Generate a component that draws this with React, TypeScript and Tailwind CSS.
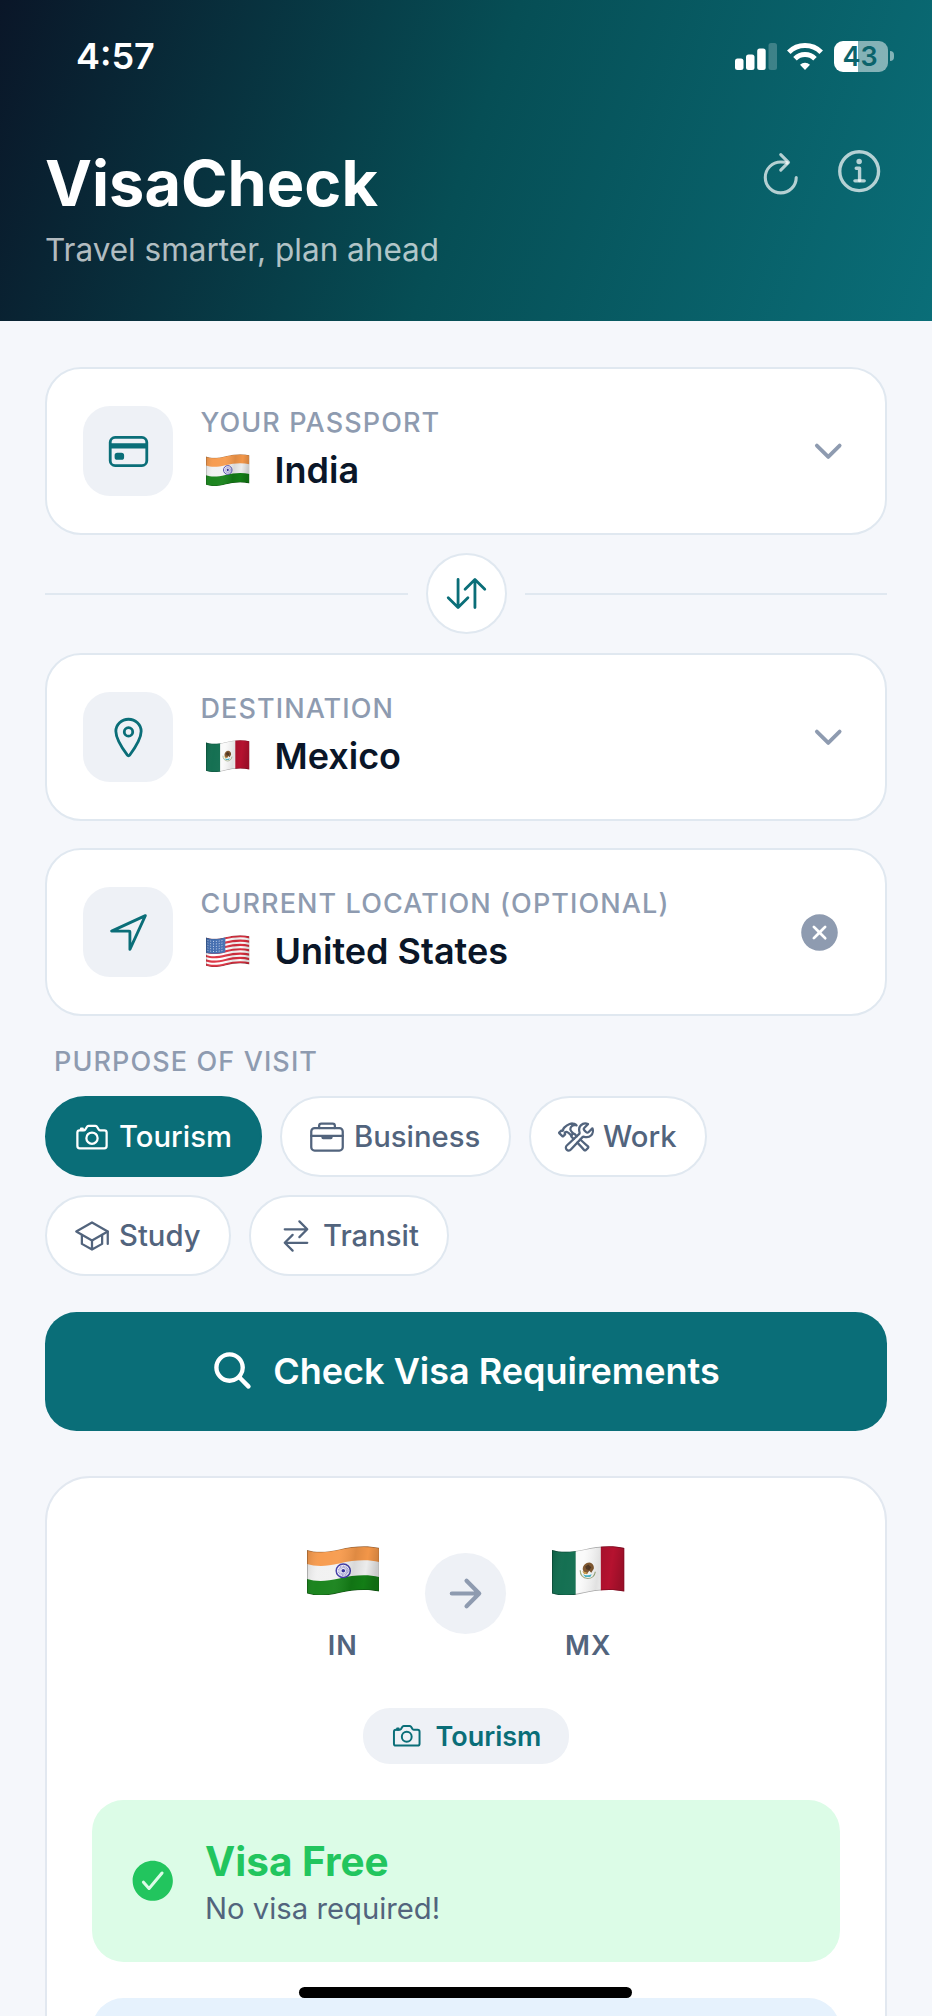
import React, { useId } from 'react';
import type { IconType } from 'react-icons';
import {
  IoArrowForward,
  IoBriefcaseOutline,
  IoCameraOutline,
  IoCardOutline,
  IoCheckmarkCircle,
  IoChevronDown,
  IoCloseCircle,
  IoConstructOutline,
  IoInformationCircleOutline,
  IoLocationOutline,
  IoNavigateOutline,
  IoRefreshOutline,
  IoSchoolOutline,
  IoSearch,
  IoSwapHorizontalOutline,
  IoSwapVerticalOutline,
} from 'react-icons/io5';

type CountryCode = 'IN' | 'MX' | 'US';

interface Purpose {
  id: string;
  label: string;
  icon: IconType;
  width: string;
}

const purposes: Purpose[] = [
  { id: 'tourism', label: 'Tourism', icon: IoCameraOutline, width: 'w-[217px]' },
  { id: 'business', label: 'Business', icon: IoBriefcaseOutline, width: 'w-[231px]' },
  { id: 'work', label: 'Work', icon: IoConstructOutline, width: 'w-[178px]' },
  { id: 'study', label: 'Study', icon: IoSchoolOutline, width: 'w-[186px]' },
  { id: 'transit', label: 'Transit', icon: IoSwapHorizontalOutline, width: 'w-[200px]' },
];

// One horizontal band of the waving flag, from y0 to y1 on its left edge
const band = (y0: number, y1: number): string =>
  `M0 ${y0} c8 2.5 18 3 32 -0.5 s28 -4.5 40 -1.5 V${y1 - 2} c-12 -3 -26 -2 -40 1.5 s-24 3 -32 0.5 Z`;

const IndiaArt = () => (
  <>
    <path d={band(4, 49)} fill="#f1f1f1" />
    <path d={band(4, 18.5)} fill="#f7994a" />
    <path d={band(34, 49)} fill="#138016" />
    <circle cx="36" cy="25.5" r="7" fill="#fff" stroke="#3b35a5" strokeWidth="1.5" />
    <circle cx="36" cy="25.5" r="4" fill="none" stroke="#8f8bd0" strokeWidth="3" strokeDasharray="0.7 0.6" />
    <circle cx="36" cy="25.5" r="1.8" fill="#2e2a9a" />
  </>
);

const MexicoArt = () => (
  <>
    <rect width="24" height="52" fill="#0b6a4b" />
    <rect x="23.5" width="25" height="52" fill="#fafafa" />
    <rect x="48.5" width="24" height="52" fill="#b91230" />
    <path d="M28 25c0 5 3 8 7.500 8.500 4 0 7-3 7.500-7" fill="none" stroke="#9aab7c" strokeWidth="1.200" />
    <path d="M30.500 29c2.500 1.500 6 1.500 9 0l-1.500 3h-5z" fill="#45b5c8" />
    <path d="M30.500 24c0-4 3-7 6.500-7 3.500 .5 5 3.500 4.500 6.500l-2.500 4-2-2-2.500 3.500-3-2z" fill="#7d5228" />
    <path d="M33 21l3-2 3 3-2 3-3-1z" fill="#4a2f1a" />
    <path d="M30 26l4 1 2 1-4 1z" fill="#c99a45" />
  </>
);

const UsaArt = () => (
  <>
    <path d={band(4, 49)} fill="#fff" />
    {[0, 2, 4, 6, 8, 10, 12].map((i) => (
      <path key={i} d={band(4 + i * 3.46, 4 + (i + 1) * 3.46)} fill="#dc2f3f" />
    ))}
    <path d="M0 4c8 2.500 18 3 32-.5V27.500c-14 3.500-24 3-32 .7z" fill="#3f6aae" />
    {[0, 1, 2, 3, 4].map((row) => (
      <path
        key={row}
        d={`M2.500 ${8.5 + row * 4}c8 2.500 16 2.500 28 -0.500`}
        stroke="#d5e0f2"
        strokeWidth="1.500"
        strokeDasharray="1.500 3.200"
        fill="none"
      />
    ))}
  </>
);

const flagArt: Record<CountryCode, React.FC> = {
  IN: IndiaArt,
  MX: MexicoArt,
  US: UsaArt,
};

const Flag: React.FC<{ code: CountryCode; className: string }> = ({ code, className }) => {
  const id = useId();
  const Art = flagArt[code];
  return (
    <svg viewBox="0 0 72 51" className={className} preserveAspectRatio="none">
      <defs>
        <clipPath id={`${id}-wave`}>
          <path d={band(4, 49)} />
        </clipPath>
        <linearGradient id={`${id}-shade`} x1="0" x2="1" y1="0" y2="0.1">
          <stop offset="0" stopColor="#000" stopOpacity="0.14" />
          <stop offset="0.2" stopColor="#fff" stopOpacity="0.04" />
          <stop offset="0.45" stopColor="#fff" stopOpacity="0.06" />
          <stop offset="0.68" stopColor="#000" stopOpacity="0.1" />
          <stop offset="0.85" stopColor="#000" stopOpacity="0.02" />
          <stop offset="1" stopColor="#000" stopOpacity="0.16" />
        </linearGradient>
      </defs>
      <g clipPath={`url(#${id}-wave)`}>
        <Art />
        <path d={band(4, 49)} fill={`url(#${id}-shade)`} stroke="#000" strokeOpacity="0.3" strokeWidth="1.5" />
      </g>
    </svg>
  );
};

const StatusBar = () => (
  <div className="flex h-[112px] items-center justify-between pr-[38px] pl-[76px]">
    <span className="text-[36px] leading-none font-semibold text-white">4:57</span>
    <div className="flex items-center">
      <svg viewBox="0 0 42 27" className="h-[27px] w-[42px]" fill="#fff">
        <rect x="0" y="15.500" width="8.500" height="11.500" rx="2.500" />
        <rect x="11" y="11.500" width="8.500" height="15.500" rx="2.500" />
        <rect x="22.200" y="5.500" width="8.500" height="21.500" rx="2.500" />
        <rect x="33.500" y="0" width="8.500" height="27" rx="2.500" fillOpacity="0.22" />
      </svg>
      <svg viewBox="0 0 36 27" className="ml-[10px] h-[27px] w-[36px]" fill="none" stroke="#fff" strokeWidth="5">
        <path d="M1.800 9.200a23 23 0 0 1 32.400 0" />
        <path d="M8 15.700a14.200 14.200 0 0 1 20 0" />
        <path d="M18 27l-5-5.300a7.500 7.500 0 0 1 10 0z" fill="#fff" stroke="none" />
      </svg>
      <div className="ml-[11px] flex h-[31px] w-[54px] items-center justify-center rounded-[9px] bg-[linear-gradient(to_right,#fff_24px,#ffffff80_24px)] pr-[2px] text-[27px] leading-none font-semibold text-[#0b636b]">
        43
      </div>
      <div className="ml-[2px] h-[10px] w-[4px] rounded-r-full bg-white/50" />
    </div>
  </div>
);

const Header = () => (
  <header className="h-[321px] bg-[linear-gradient(109deg,#0a1628_0%,#064e55_50%,#0a6e78_100%)]">
    <StatusBar />
    <div className="mt-[33px] flex items-start justify-between px-[45px]">
      <div>
        <h1 className="text-[63px] leading-[76px] font-bold text-white">VisaCheck</h1>
        <p className="mt-[9px] text-[31.500px] leading-[39px] text-white/70">Travel smarter, plan ahead</p>
      </div>
      <div className="flex items-end gap-[28px] text-white/70">
        <IoRefreshOutline className="mb-[1px] size-[49.500px]" />
        <IoInformationCircleOutline className="size-[54px]" />
      </div>
    </div>
  </header>
);

interface SelectorCardProps {
  icon: IconType;
  label: string;
  code: CountryCode;
  country: string;
  clearable?: boolean;
}

const SelectorCard: React.FC<SelectorCardProps> = ({ icon: Icon, label, code, country, clearable }) => (
  <button className="flex h-[168px] w-full items-center rounded-[36px] border-2 border-[#e0e8f0] bg-white pr-[37px] pl-[36px] text-left">
    <span className="flex size-[90px] items-center justify-center rounded-[27px] bg-[#eef1f6]">
      <Icon className="size-[45px] text-[#0a6e78]" />
    </span>
    <span className="ml-[27.500px] flex h-[90px] flex-1 flex-col">
      <span className="text-[27px] leading-[34px] font-medium tracking-[1.1px] text-[#8e9bb0]">{label}</span>
      <span className="mt-[7px] flex h-[46px] items-center">
        <Flag code={code} className="ml-[5.500px] h-[32px] w-[43.500px]" />
        <span className="ml-[25px] text-[36px] leading-[46px] font-semibold text-[#0a1628]">{country}</span>
      </span>
    </span>
    {clearable ? (
      <IoCloseCircle className="mr-[6px] size-[45px] text-[#8e9bb0]" />
    ) : (
      <IoChevronDown className="size-[40.500px] text-[#8e9bb0]" />
    )}
  </button>
);

const SwapDivider = () => (
  <div className="mt-[18px] mb-[19px] flex items-center gap-[18px]">
    <div className="h-[2px] flex-1 bg-[#e0e8f0]" />
    <button className="flex size-[81px] items-center justify-center rounded-full border-2 border-[#e0e8f0] bg-white">
      <IoSwapVerticalOutline className="size-[45px] text-[#0a6e78]" />
    </button>
    <div className="h-[2px] flex-1 bg-[#e0e8f0]" />
  </div>
);

const PurposeChip: React.FC<{ purpose: Purpose; active: boolean }> = ({ purpose, active }) => {
  const Icon = purpose.icon;
  return (
    <button
      className={`flex h-[81px] items-center gap-[9.500px] rounded-full border-2 pl-[26.500px] ${purpose.width} ${
        active ? 'border-[#0a6e78] bg-[#0a6e78] text-white' : 'border-[#e0e8f0] bg-white text-[#52647d]'
      }`}
    >
      <Icon className="size-[36px] shrink-0" />
      <span className="text-[29.250px] leading-none font-medium">{purpose.label}</span>
    </button>
  );
};

const RouteCountry: React.FC<{ code: CountryCode }> = ({ code }) => (
  <div className="flex h-[140px] flex-col items-center pt-[22.500px]">
    <Flag code={code} className="h-[51px] w-[72.500px]" />
    <span className="mt-[34px] text-[27px] leading-[34px] font-semibold tracking-[1.1px] text-[#52647d]">{code}</span>
  </div>
);

const ResultCard = () => (
  <section className="mt-[45px] h-[700px] rounded-[45px] border-2 border-[#e2e8f0] bg-white p-[45px]">
    <div className="flex items-center justify-center gap-[46px] pr-px">
      <RouteCountry code="IN" />
      <div className="flex size-[81px] items-center justify-center rounded-full bg-[#eef1f6]">
        <IoArrowForward className="size-[45px] text-[#8e9bb0]" />
      </div>
      <RouteCountry code="MX" />
    </div>

    <div className="mx-auto mt-[45px] flex h-[56px] w-[206px] items-center justify-center gap-[13.500px] rounded-[27px] bg-[#eef1f6] text-[#0a6e78]">
      <IoCameraOutline className="size-[31.500px]" />
      <span className="text-[27px] leading-none font-semibold">Tourism</span>
    </div>

    <div className="mt-[36px] flex h-[162px] items-center rounded-[31.500px] bg-[#dcfce7] px-[36px]">
      <IoCheckmarkCircle className="size-[49.500px] text-[#22c55e]" />
      <div className="ml-[27.500px] flex flex-col pt-[7px]">
        <span className="text-[40.500px] leading-[49px] font-bold text-[#22c55e]">Visa Free</span>
        <span className="text-[29.250px] leading-[46px] text-[#52647d]">No visa required!</span>
      </div>
    </div>

    <div className="mt-[36px] h-[162px] rounded-[31.500px] bg-[#e6f2fd]" />
  </section>
);

export default function App() {
  return (
    <div className="relative h-[2016px] w-[932px] overflow-hidden bg-[#f5f7fb] font-['Inter',sans-serif]">
      <Header />

      <main className="px-[45px] pt-[46px]">
        <SelectorCard icon={IoCardOutline} label="YOUR PASSPORT" code="IN" country="India" />
        <SwapDivider />
        <SelectorCard icon={IoLocationOutline} label="DESTINATION" code="MX" country="Mexico" />
        <div className="h-[27px]" />
        <SelectorCard
          icon={IoNavigateOutline}
          label="CURRENT LOCATION (OPTIONAL)"
          code="US"
          country="United States"
          clearable
        />

        <h2 className="mt-[29px] ml-[9px] text-[27px] leading-[34px] font-medium tracking-[1.1px] text-[#8e9bb0]">
          PURPOSE OF VISIT
        </h2>
        <div className="mt-[17px] flex flex-wrap gap-[18px]">
          {purposes.map((purpose) => (
            <PurposeChip key={purpose.id} purpose={purpose} active={purpose.id === 'tourism'} />
          ))}
        </div>

        <button className="mt-[36px] flex h-[119px] w-full items-center justify-center gap-[18px] rounded-[31.500px] bg-[#0a6e78] pr-[2px] pb-[2px] text-white">
          <IoSearch className="size-[45px]" />
          <span className="text-[36px] leading-none font-semibold">Check Visa Requirements</span>
        </button>

        <ResultCard />
      </main>

      {/* Home indicator */}
      <div className="absolute bottom-[18px] left-[299px] h-[11px] w-[333px] rounded-full bg-black" />
    </div>
  );
}
